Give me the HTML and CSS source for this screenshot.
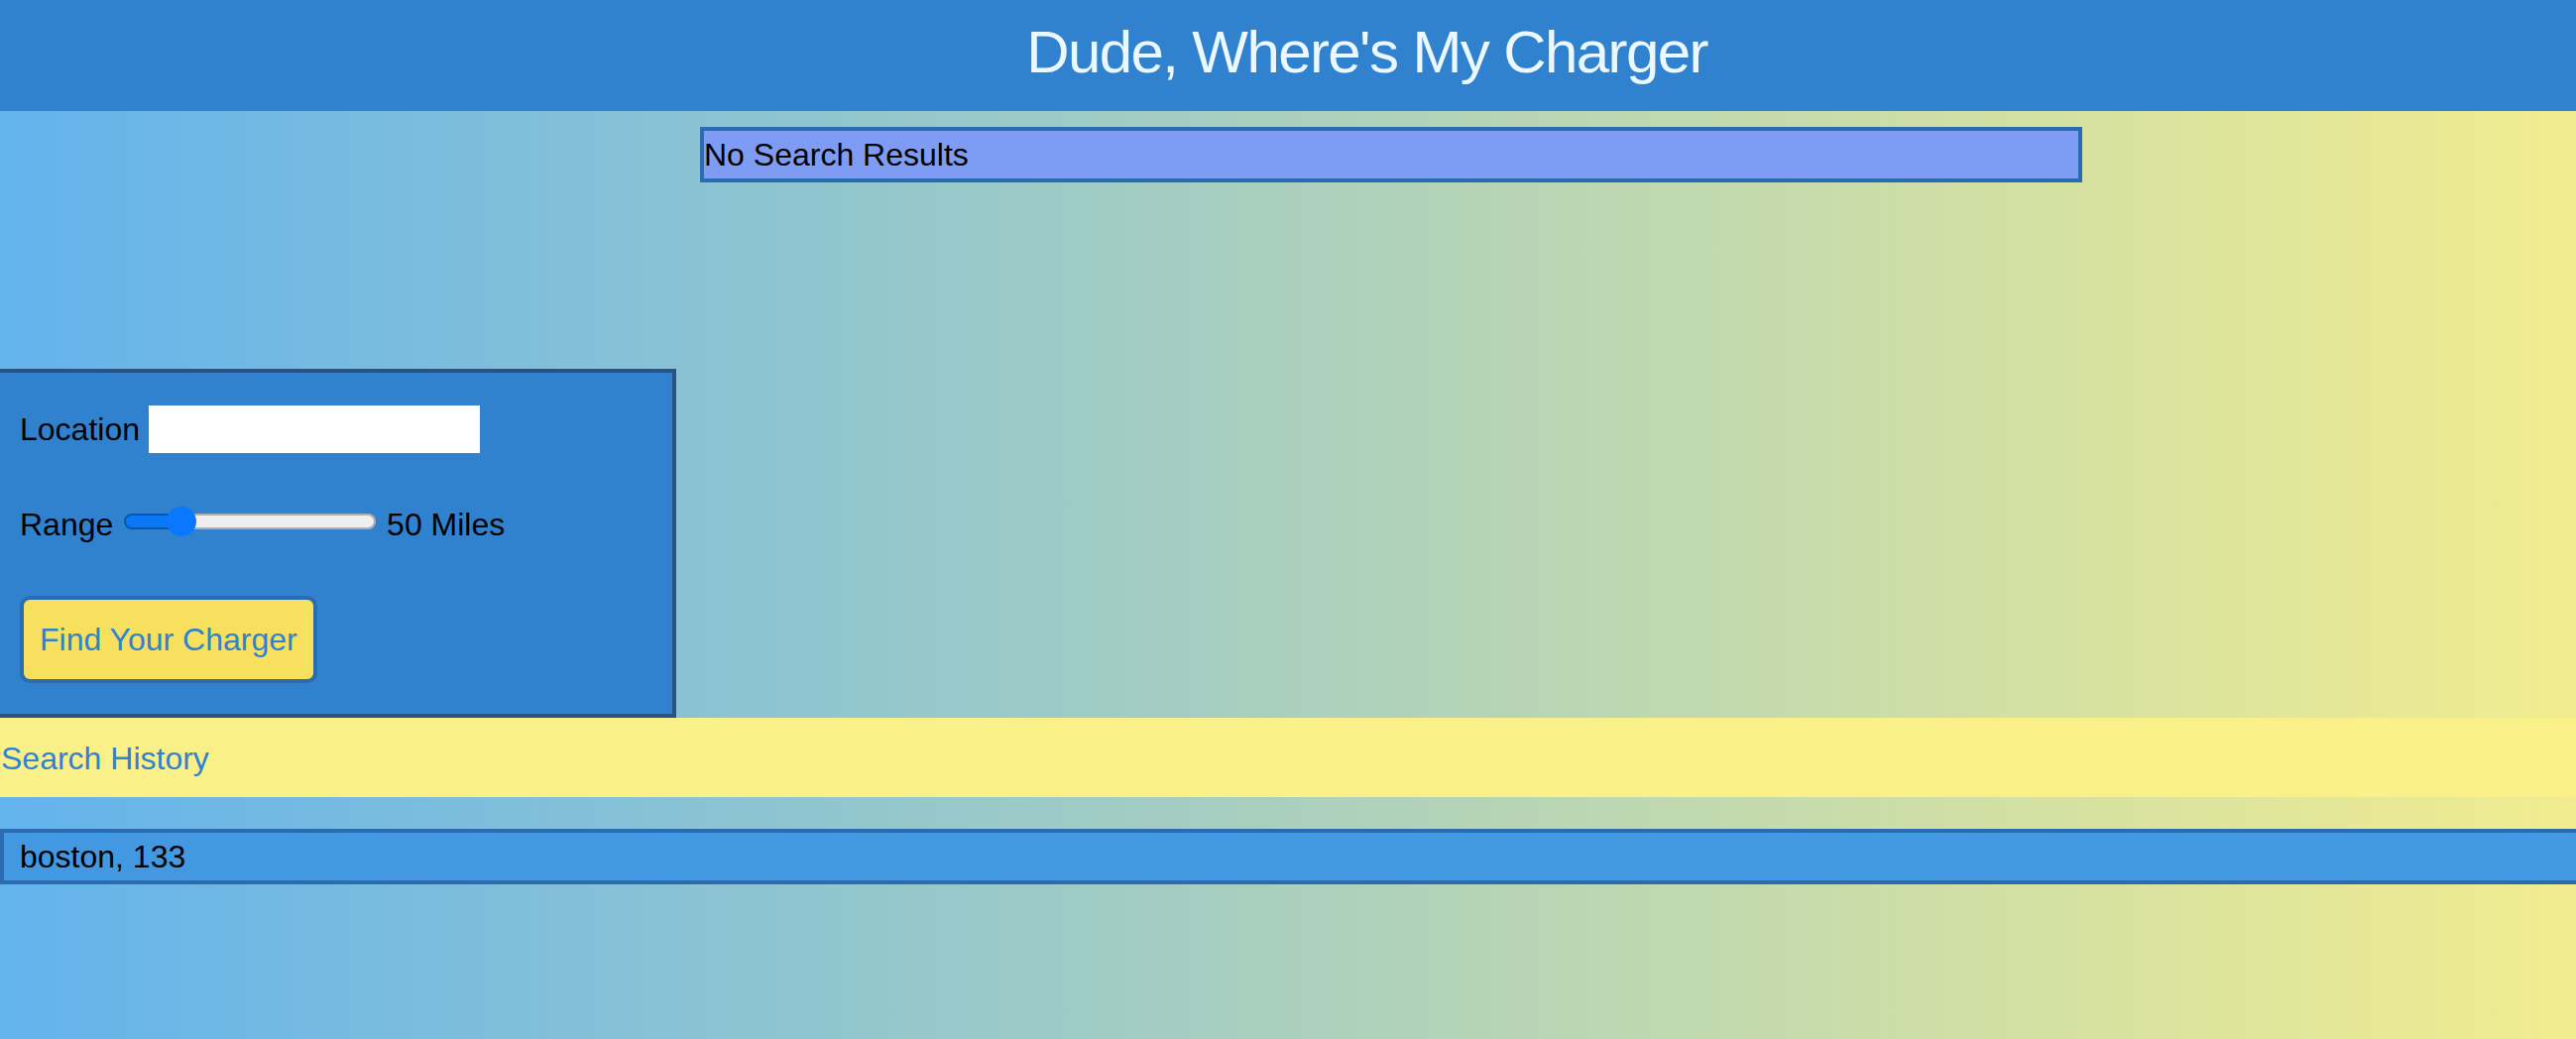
FILE: index.html
```html
<!DOCTYPE html>
<html lang="en">
<head>
<meta charset="utf-8">
<title>Dude, Where's My Charger</title>
<link rel="stylesheet" href="styles.css">
</head>
<body>
<div class="page">
  <header class="site-header">
    <h1 class="title">Dude, Where's My Charger</h1>
  </header>

  <section class="results">No Search Results</section>

  <form class="search-form">
    <div class="form-row">
      <label for="location">Location</label>
      <input id="location" class="location-input" type="text">
    </div>
    <div class="form-row">
      <label for="range">Range</label>
      <input id="range" class="range-input" type="range" min="0" max="260" value="50">
      <span class="range-value">50 Miles</span>
    </div>
    <button type="button" class="find-btn">Find Your Charger</button>
  </form>

  <div class="history-heading">Search History</div>

  <ul class="history-list">
    <li class="history-item">boston, 133</li>
  </ul>
</div>
</body>
</html>
```

FILE: styles.css
```css
* {
  box-sizing: border-box;
}

html,
body {
  margin: 0;
  padding: 0;
  overflow: hidden;
}

body {
  font-family: "Liberation Sans", Arial, sans-serif;
  font-size: 32px;
  line-height: 48px;
  color: #000;
}

.page {
  width: 100%;
  min-height: 1048px;
  background: linear-gradient(to right, #63b3ed 0, #faf089 2757px);
}

.site-header {
  background: #3182ce;
  padding: 17px 0 23px 159px;
  text-align: center;
}

.title {
  margin: 0;
  font-size: 60px;
  line-height: 72px;
  font-weight: normal;
  letter-spacing: -1.6px;
  color: #ebf8ff;
}

.results {
  margin: 16px 0 0 706px;
  width: 1394px;
  height: 56px;
  background: #7f9cf5;
  border: 4px solid #2b6cb0;
  line-height: 48px;
}

.search-form {
  margin: 188px 0 0;
  width: 682px;
  background: #3182ce;
  border: 4px solid #2c5282;
  border-left: 0;
  padding: 33px 16px 31px 20px;
  display: flex;
  flex-direction: column;
  align-items: flex-start;
  gap: 48px;
}

.form-row {
  height: 48px;
  line-height: 48px;
  white-space: nowrap;
}

.location-input {
  width: 334px;
  height: 48px;
  border: 0;
  padding: 0 4px;
  margin: 0;
  background: #fff;
  font: inherit;
  outline: none;
}

.range-input {
  -webkit-appearance: none;
  appearance: none;
  width: 254px;
  height: 30px;
  margin: 0 2px;
  padding: 0;
  background: transparent;
  vertical-align: -1px;
}

.range-input::-webkit-slider-runnable-track {
  height: 16px;
  border-radius: 8px;
  background: linear-gradient(to right, #0a77f5 0 23%, #efefef 23% 100%);
  box-shadow: inset 0 0 0 2px rgba(0, 0, 0, 0.27);
}

.range-input::-webkit-slider-thumb {
  -webkit-appearance: none;
  appearance: none;
  width: 30px;
  height: 30px;
  margin-top: -7px;
  border-radius: 50%;
  background: #0a78fe;
  border: 0;
}

.find-btn {
  font: inherit;
  line-height: 48px;
  color: #3182ce;
  background: #f6e05e;
  border: 4px solid #2b6cb0;
  border-radius: 10px;
  padding: 16px;
  margin: 0;
  cursor: pointer;
}

.history-heading {
  background: #faf089;
  color: #3182ce;
  padding: 17px 0 15px 1px;
  line-height: 48px;
}

.history-list {
  list-style: none;
  margin: 32px 0 0;
  padding: 0;
}

.history-item {
  background: #4299e1;
  border: 4px solid #2b6cb0;
  border-right: 0;
  padding: 1px 16px 0;
  height: 56px;
  line-height: 47px;
}
```
